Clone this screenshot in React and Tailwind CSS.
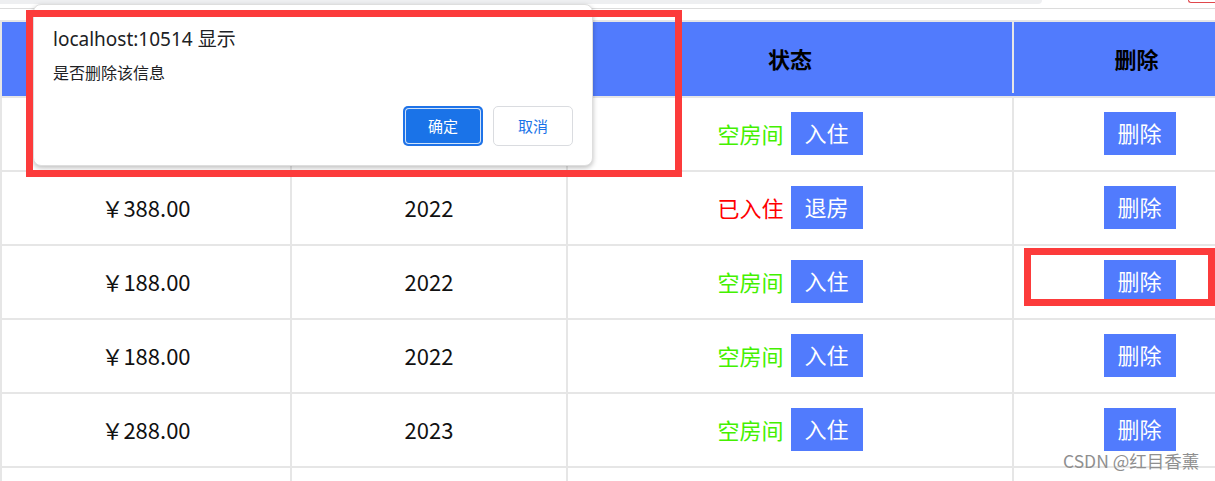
const rows = [
  { price: "", year: "", status: "空房间", action: "入住" },
  { price: "￥388.00", year: "2022", status: "已入住", action: "退房" },
  { price: "￥188.00", year: "2022", status: "空房间", action: "入住" },
  { price: "￥188.00", year: "2022", status: "空房间", action: "入住" },
  { price: "￥288.00", year: "2023", status: "空房间", action: "入住" },
];

const cjk = "font-['Noto_Sans_CJK_SC',sans-serif]";

function BlueBtn({ children }) {
  return (
    <span className="inline-flex h-[43px] w-[72px] items-center justify-center bg-[#517bfd] pb-[2px] text-[22px] leading-none text-white">
      {children}
    </span>
  );
}

function Row({ r }) {
  const checkedIn = r.status === "已入住";
  return (
    <div className="flex h-[74px] border-b-2 border-[#e6e6e6] text-[22px] leading-none">
      <div className="flex w-[290px] shrink-0 items-center justify-center border-r-2 border-[#e6e6e6] pb-[3px] text-[#111]">
        {r.price}
      </div>
      <div className="flex w-[276px] shrink-0 items-center justify-center border-r-2 border-[#e6e6e6] pb-[3px] text-[#111]">
        {r.year}
      </div>
      <div className="flex w-[446px] shrink-0 items-center justify-center gap-[7px] border-r-2 border-[#e6e6e6] pb-[2px]">
        <span className={checkedIn ? "text-[#ff0000]" : "text-[#44f000]"}>{r.status}</span>
        <BlueBtn>{r.action}</BlueBtn>
      </div>
      <div className="flex w-[253px] shrink-0 items-center justify-center border-r-2 border-[#e6e6e6] pb-[2px]">
        <BlueBtn>删除</BlueBtn>
      </div>
    </div>
  );
}

export default function App() {
  return (
    <div className={`relative h-[481px] w-[1215px] overflow-hidden bg-white ${cjk}`}>
      {/* browser strip */}
      <div className="flex h-[9px] items-start justify-between border-b border-[#dcdcdc]">
        <div className="h-[4px] w-[1042px] rounded-br-[6px] bg-[#eeeff1]" />
        <div className="h-[3px] w-[27px] rounded-bl-[6px] border-b border-l border-[#e0474c]" />
      </div>

      {/* table */}
      <div className="mt-[11px] w-[1267px] border-l-2 border-t-2 border-[#e6e6e6]">
        <div className="flex h-[76px] border-b-2 border-[#e6e6e6] bg-[#517bfd] pb-[3px] text-[22px] font-bold leading-none text-black">
          <div className="w-[290px] shrink-0 border-r-2 border-[#e6e6e6]" />
          <div className="w-[276px] shrink-0 border-r-2 border-[#e6e6e6]" />
          <div className="flex w-[446px] shrink-0 items-center justify-center border-r-2 border-[#e6e6e6]">状态</div>
          <div className="flex w-[253px] shrink-0 items-center justify-center border-r-2 border-[#e6e6e6] pr-[6px]">删除</div>
        </div>
        {rows.map((r, i) => (
          <Row key={i} r={r} />
        ))}
        <div className="flex h-[74px]">
          <div className="w-[290px] shrink-0 border-r-2 border-[#e6e6e6]" />
          <div className="w-[276px] shrink-0 border-r-2 border-[#e6e6e6]" />
          <div className="w-[446px] shrink-0 border-r-2 border-[#e6e6e6]" />
          <div className="w-[253px] shrink-0 border-r-2 border-[#e6e6e6]" />
        </div>
      </div>

      {/* alert dialog */}
      <div className="absolute left-[33px] top-[4px] flex h-[162px] w-[560px] flex-col rounded-[8px] border border-[#dedede] bg-white px-[19px] pb-[19px] pt-[20px] shadow-[0_2px_5px_rgba(0,0,0,0.25)] font-['Noto_Sans','Noto_Sans_CJK_SC',sans-serif] text-[#202124]">
        <div className="text-[19px] leading-[28px]">localhost:10514 显示</div>
        <div className="mt-[10px] text-[16px] leading-[20px]">是否删除该信息</div>
        <div className="mt-auto flex justify-end gap-[10px]">
          <div className="flex h-[40px] w-[80px] items-center justify-center rounded-[5px] bg-[#1f73e8] p-[2px]">
            <div className="flex h-full w-full items-center justify-center rounded-[4px] border border-white/80 bg-[#1a73e8] text-[15px] text-white">
              确定
            </div>
          </div>
          <div className="flex h-[40px] w-[80px] items-center justify-center rounded-[5px] border border-[#dadce0] bg-white text-[15px] text-[#1a73e8]">
            取消
          </div>
        </div>
      </div>

      {/* annotation boxes */}
      <div className="absolute left-[26px] top-[10px] h-[167px] w-[656px] border-[7px] border-[#fc3b3b]" />
      <div className="absolute left-[1024px] top-[248px] h-[58px] w-[191px] border-[7px] border-[#fc3b3b]" />

      {/* watermark */}
      <div className="absolute left-[1063px] top-[449px] text-[17.5px] leading-[24px] text-[#8f8f8f]">
        CSDN @红目香薰
      </div>
    </div>
  );
}
